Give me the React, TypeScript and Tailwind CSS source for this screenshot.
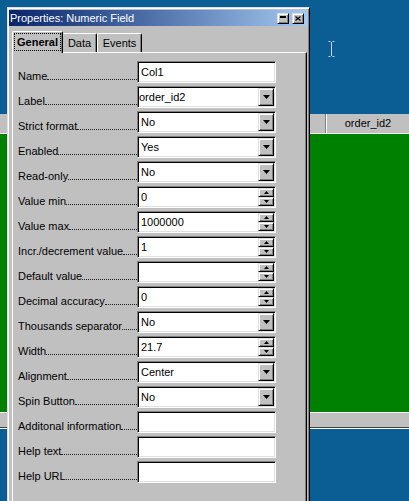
const raised =
  "border border-t-[#dfdfdf] border-l-[#dfdfdf] border-r-black border-b-black shadow-[inset_1px_1px_#fff,inset_-1px_-1px_#808080]";

type Kind = "text" | "select" | "spin";

const rows: { label: string; value: string; kind: Kind; flush?: boolean }[] = [
  { label: "Name", value: "Col1", kind: "text" },
  { label: "Label", value: "order_id2", kind: "select", flush: true },
  { label: "Strict format", value: "No", kind: "select" },
  { label: "Enabled", value: "Yes", kind: "select" },
  { label: "Read-only", value: "No", kind: "select" },
  { label: "Value min", value: "0", kind: "spin" },
  { label: "Value max", value: "1000000", kind: "spin" },
  { label: "Incr./decrement value", value: "1", kind: "spin" },
  { label: "Default value", value: "", kind: "spin" },
  { label: "Decimal accuracy", value: "0", kind: "spin" },
  { label: "Thousands separator", value: "No", kind: "select" },
  { label: "Width", value: "21.7", kind: "spin" },
  { label: "Alignment", value: "Center", kind: "select" },
  { label: "Spin Button", value: "No", kind: "select" },
  { label: "Additonal information", value: "", kind: "text" },
  { label: "Help text", value: "", kind: "text" },
  { label: "Help URL", value: "", kind: "text" },
];

function DownArrow() {
  return (
    <svg width="7" height="4" viewBox="0 0 7 4">
      <polygon points="0,0 7,0 3.5,4" fill="#000" />
    </svg>
  );
}

function SpinButtons() {
  return (
    <div className="flex flex-col w-[16px]">
      <div className={`h-[9px] bg-[#c0c0c0] ${raised} flex items-center justify-center`}>
        <svg width="5" height="3" viewBox="0 0 5 3">
          <polygon points="2.5,0 5,3 0,3" fill="#000" />
        </svg>
      </div>
      <div className={`h-[9px] bg-[#c0c0c0] ${raised} flex items-center justify-center`}>
        <svg width="5" height="3" viewBox="0 0 5 3">
          <polygon points="0,0 5,0 2.5,3" fill="#000" />
        </svg>
      </div>
    </div>
  );
}

function Field({ value, kind, flush }: { value: string; kind: Kind; flush?: boolean }) {
  return (
    <div className="w-[139px] h-[22px] bg-white border border-t-[#808080] border-l-[#808080] border-b-white border-r-white shadow-[inset_1px_1px_#000,inset_-1px_-1px_#dfdfdf] p-[1px] flex">
      <span className={`flex-1 flex items-center text-[11px] text-black ${flush ? "pl-0" : "pl-[2px]"}`}>
        {value}
      </span>
      {kind === "select" && (
        <div className={`w-[16px] bg-[#c0c0c0] ${raised} flex items-center justify-center`}>
          <DownArrow />
        </div>
      )}
      {kind === "spin" && <SpinButtons />}
    </div>
  );
}

export default function App() {
  return (
    <div className="relative w-[409px] h-[501px] overflow-hidden bg-[#0b5e94] font-['Liberation_Sans',Arial,sans-serif]">
      {/* spreadsheet behind the dialog */}
      <div className="flex flex-col h-full">
        <div className="h-[114px]" />
        <div className="flex h-[20px] bg-[#c0c0c0] border-b border-b-[#f0f0f0]">
          <div className="flex-1 border-r border-r-[#808080]" />
          <div className="w-[83px] flex items-center justify-center text-[11px] text-black border-l border-l-white">
            order_id2
          </div>
        </div>
        <div className="h-[278px] bg-[#008000]" />
        <div className="h-[1px] bg-white" />
        <div className="h-[14px] bg-[#c0c0c0]" />
        <div className="h-[1px] bg-[#404040]" />
        <div className="h-[1px] bg-white" />
        <div className="flex-1" />
      </div>

      {/* text cursor */}
      <svg className="absolute left-[327px] top-[40px]" width="9" height="18" viewBox="0 0 9 18">
        <path d="M1.5 1.5H3.5M5.5 1.5H7.5M4.5 2V16M1.5 16.5H3.5M5.5 16.5H7.5" stroke="#c8d4e0" strokeWidth="1" fill="none" />
      </svg>

      {/* dialog window */}
      <div className={`absolute left-[7px] top-[7px] w-[303px] h-[520px] bg-[#c0c0c0] ${raised} px-[1px] pt-[2px] flex flex-col`}>
        <div className="h-[16px] flex items-center bg-gradient-to-r from-[#0a246a] to-[#a6caf0] pl-[1px] pr-[4px]">
          <span className="text-white text-[11px]">Properties: Numeric Field</span>
          <div className="ml-auto flex gap-[3px]">
            <div className={`w-[12px] h-[11px] bg-[#c0c0c0] ${raised} flex justify-center pt-[2px]`}>
              <div className="w-[6px] h-[2px] bg-black" />
            </div>
            <div className={`w-[12px] h-[11px] bg-[#c0c0c0] ${raised} flex items-center justify-center`}>
              <svg width="6" height="5" viewBox="0 0 6 5">
                <path d="M0.5 0.5L5.5 4.5M5.5 0.5L0.5 4.5" stroke="#000" strokeWidth="1.2" fill="none" />
              </svg>
            </div>
          </div>
        </div>

        {/* tabs */}
        <div className="mt-[5px] h-[21px] pl-[3px] flex items-end relative z-10">
          <div className="w-[51px] h-[22px] -mb-[1px] bg-[#c0c0c0] border-l border-t border-r border-l-white border-t-white border-r-black shadow-[inset_-1px_0_#808080] rounded-t-[2px] px-[1px] pt-[1px] pb-[2px] flex">
            <div className="flex-1 border border-dotted border-black flex items-center justify-center text-[11px] font-bold text-black">
              General
            </div>
          </div>
          <div className="w-[34px] h-[19px] border-t border-r border-t-white border-r-black shadow-[inset_-1px_0_#808080] rounded-t-[2px] flex items-center justify-center text-[11px] text-black">
            Data
          </div>
          <div className="w-[45px] h-[19px] border-l border-t border-r border-l-white border-t-white border-r-black shadow-[inset_-1px_0_#808080] rounded-t-[2px] flex items-center justify-center text-[11px] text-black">
            Events
          </div>
        </div>

        {/* panel */}
        <div className="ml-[3px] mr-[1px] flex-1 border border-t-white border-l-white border-r-black border-b-black shadow-[inset_-1px_-1px_#808080] pt-[8px] pl-[5px] flex flex-col gap-[3px]">
          {rows.map((r) => (
            <div key={r.label} className="flex h-[22px]">
              <div className="w-[119px] flex items-end pb-[1px] text-[11px] text-black leading-none">
                <span className="whitespace-nowrap">{r.label}</span>
                <span className="flex-1 border-b border-dotted border-[#202020] mb-[2px]" />
              </div>
              <Field value={r.value} kind={r.kind} flush={r.flush} />
            </div>
          ))}
        </div>
      </div>
    </div>
  );
}
